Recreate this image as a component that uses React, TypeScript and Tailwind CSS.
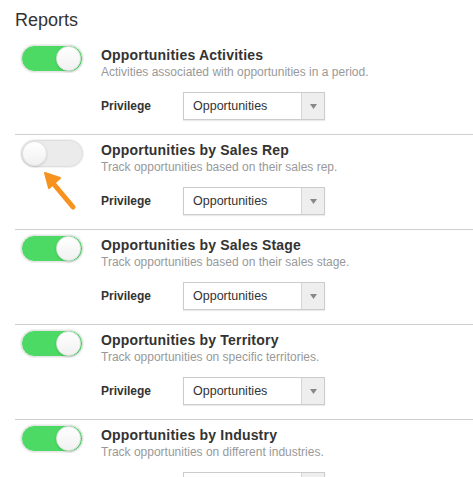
import React from "react";

type Item = { title: string; desc: string; on: boolean };

const items: Item[] = [
  { title: "Opportunities Activities", desc: "Activities associated with opportunities in a period.", on: true },
  { title: "Opportunities by Sales Rep", desc: "Track opportunities based on their sales rep.", on: false },
  { title: "Opportunities by Sales Stage", desc: "Track opportunities based on their sales stage.", on: true },
  { title: "Opportunities by Territory", desc: "Track opportunities on specific territories.", on: true },
  { title: "Opportunities by Industry", desc: "Track opportunities on different industries.", on: true },
];

function Toggle({ on }: { on: boolean }) {
  return (
    <div
      className={
        "relative w-[62px] h-[27px] rounded-full border " +
        (on ? "bg-[#4cd964] border-[#e6e6e6] shadow-[0_0_0_1px_#f0f0f0]" : "bg-[#ebebeb] border-[#dedede] shadow-[0_0_0_1px_#f3f3f3]")
      }
    >
      <div
        className={
          "absolute top-[0px] w-[25px] h-[25px] rounded-full bg-gradient-to-b from-white to-[#f1f1f1] border border-[#e2e2e2] shadow-[0_1px_2px_rgba(0,0,0,0.15)] " +
          (on ? "right-[1px]" : "left-[0px]")
        }
      />
    </div>
  );
}

function Select() {
  return (
    <div className="flex w-[142px] h-[28px] border border-[#cccccc] bg-white shadow-[0_1px_1px_rgba(0,0,0,0.08)]">
      <div className="flex-1 flex items-center pl-[9px] text-[12.5px] text-[#333]">Opportunities</div>
      <div className="w-[23px] flex items-center justify-center bg-[#eeeeee] border-l border-[#d5d5d5]">
        <svg width="7" height="5" viewBox="0 0 7 5">
          <path d="M0 0 L7 0 L3.5 5 Z" fill="#888" />
        </svg>
      </div>
    </div>
  );
}

export default function App() {
  return (
    <div className="relative w-[473px] h-[477px] overflow-hidden bg-white pl-[15px] text-[#333]" style={{ fontFamily: '"Liberation Sans", Arial, sans-serif' }}>
      <div className="pt-[9px] h-[39px] text-[18px] leading-[22px] text-[#333]">Reports</div>
      {items.map((it, i) => (
        <div
          key={i}
          className={"h-[95px] border-t flex pt-[5px] " + (i === 0 ? "border-transparent" : "border-[#cfcfcf]")}
        >
          <div className="w-[86px] pl-[6px]">
            <Toggle on={it.on} />
          </div>
          <div className="flex flex-col">
            <div className="mt-[2px] text-[14px] leading-[16px] font-bold tracking-[0.2px] text-[#333]">{it.title}</div>
            <div className="mt-[1px] text-[12px] leading-[16px] text-[#999]">{it.desc}</div>
            <div className="flex items-center mt-[12px]">
              <div className="w-[82px] text-[12px] font-bold text-[#333]">Privilege</div>
              <Select />
            </div>
          </div>
        </div>
      ))}
      <svg className="absolute left-[38px] top-[166px]" width="44" height="48" viewBox="0 0 44 48">
        <line x1="35" y1="41" x2="14" y2="16" stroke="#f7921e" strokeWidth="5" strokeLinecap="round" />
        <path d="M7 7 L22 12 L11 22 Z" fill="#f7921e" stroke="#f7921e" strokeWidth="2" strokeLinejoin="round" />
      </svg>
    </div>
  );
}
